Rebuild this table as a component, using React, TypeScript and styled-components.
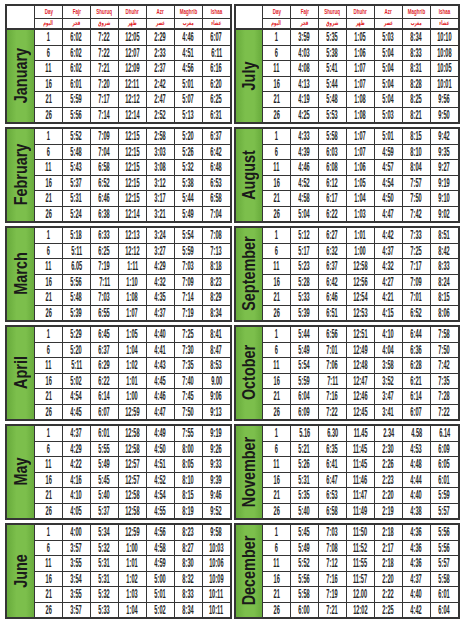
import React from 'react';
import styled, { createGlobalStyle } from 'styled-components';

const Global = createGlobalStyle`
  html, body { margin: 0; padding: 0; background: #fff; }
  body { font-family: "Liberation Sans", Arial, sans-serif; }
`;

type Row = string[];
interface Month { name: string; rows: Row[] }

const parse = (s: string): Row[] =>
  s.trim().split('\n').map((l) => l.trim().split(/\s+/));

const left: Month[] = [
  { name: 'January', rows: parse(`
1 6:02 7:22 12:05 2:29 4:46 6:07
6 6:02 7:22 12:07 2:33 4:51 6:11
11 6:02 7:21 12:09 2:37 4:56 6:16
16 6:01 7:20 12:11 2:42 5:01 6:20
21 5:59 7:17 12:12 2:47 5:07 6:25
26 5:56 7:14 12:14 2:52 5:13 6:31`) },
  { name: 'February', rows: parse(`
1 5:52 7:09 12:15 2:58 5:20 6:37
6 5:48 7:04 12:15 3:03 5:26 6:42
11 5:43 6:58 12:15 3:08 5:32 6:48
16 5:37 6:52 12:15 3:12 5:38 6:53
21 5:31 6:46 12:15 3:17 5:44 6:58
26 5:24 6:38 12:14 3:21 5:49 7:04`) },
  { name: 'March', rows: parse(`
1 5:18 6:33 12:13 3:24 5:54 7:08
6 5:11 6:25 12:12 3:27 5:59 7:13
11 6.05 7:19 1:11 4:29 7:03 8:18
16 5:56 7:11 1:10 4:32 7:09 8:23
21 5:48 7:03 1:08 4:35 7:14 8:29
26 5:39 6:55 1:07 4:37 7:19 8:34`) },
  { name: 'April', rows: parse(`
1 5:29 6:45 1:05 4:40 7:25 8:41
6 5:20 6:37 1:04 4:41 7:30 8:47
11 5:11 6:29 1:02 4:43 7:35 8:53
16 5:02 6:22 1:01 4:45 7:40 9.00
21 4:54 6:14 1:00 4:46 7:45 9:06
26 4:45 6:07 12:59 4:47 7:50 9:13`) },
  { name: 'May', rows: parse(`
1 4:37 6:01 12:58 4:49 7:55 9:19
6 4:29 5:55 12:58 4:50 8:00 9:26
11 4:22 5:49 12:57 4:51 8:05 9:33
16 4:16 5:45 12:57 4:52 8:10 9:39
21 4:10 5:40 12:58 4:54 8:15 9:46
26 4:05 5:37 12:58 4:55 8:19 9:52`) },
  { name: 'June', rows: parse(`
1 4:00 5:34 12:59 4:56 8:23 9:58
6 3:57 5:32 1:00 4:58 8:27 10:03
11 3:55 5:31 1:01 4:59 8:30 10:06
16 3:54 5:31 1:02 5:00 8:32 10:09
21 3:55 5:32 1:03 5:01 8:33 10:11
26 3:57 5:33 1:04 5:02 8:34 10:11`) },
];

const right: Month[] = [
  { name: 'July', rows: parse(`
1 3:59 5:35 1:05 5:03 8:34 10:10
6 4:03 5:38 1:06 5:04 8:33 10:08
11 4:08 5:41 1:07 5:04 8:31 10:05
16 4:13 5:44 1:07 5:04 8:28 10:01
21 4:19 5:48 1:08 5:04 8:25 9:56
26 4:25 5:53 1:08 5:03 8:21 9:50`) },
  { name: 'August', rows: parse(`
1 4:33 5:58 1:07 5:01 8:15 9:42
6 4:39 6:03 1:07 4:59 8:10 9:35
11 4:46 6:08 1:06 4:57 8:04 9:27
16 4:52 6:12 1:05 4:54 7:57 9:19
21 4:58 6:17 1:04 4:50 7:50 9:10
26 5:04 6:22 1:03 4:47 7:42 9:02`) },
  { name: 'September', rows: parse(`
1 5:12 6:27 1:01 4:42 7:33 8:51
6 5:17 6:32 1:00 4:37 7:25 8:42
11 5:23 6:37 12:58 4:32 7:17 8:33
16 5:28 6:42 12:56 4:27 7:09 8:24
21 5:33 6:46 12:54 4:21 7:01 8:15
26 5:39 6:51 12:53 4:15 6:52 8:06`) },
  { name: 'October', rows: parse(`
1 5:44 6:56 12:51 4:10 6:44 7:58
6 5:49 7:01 12:49 4:04 6:36 7:50
11 5:54 7:06 12:48 3:58 6:28 7:42
16 5:59 7:11 12:47 3:52 6:21 7:35
21 6:04 7:16 12:46 3:47 6:14 7:28
26 6:09 7:22 12:45 3:41 6:07 7:22`) },
  { name: 'November', rows: parse(`
1 5.16 6.30 11.45 2.34 4.58 6.14
6 5:21 6:35 11:45 2:30 4:53 6:09
11 5:26 6:41 11:45 2:26 4:48 6:05
16 5:31 6:47 11:46 2:23 4:44 6:01
21 5:35 6:53 11:47 2:20 4:40 5:59
26 5:40 6:58 11:49 2:19 4:38 5:57`) },
  { name: 'December', rows: parse(`
1 5:45 7:03 11:50 2:18 4:36 5:56
6 5:49 7:08 11:52 2:17 4:36 5:56
11 5:52 7:12 11:55 2:18 4:36 5:57
16 5:56 7:16 11:57 2:20 4:37 5:58
21 5:58 7:19 12.00 2:22 4:40 6:01
26 6:00 7:21 12:02 2:25 4:42 6:04`) },
];

const heads: [string, string][] = [
  ['Day', 'اليوم'],
  ['Fajr', 'فجر'],
  ['Shuruq', 'شروق'],
  ['Dhuhr', 'ظهر'],
  ['Azr', 'عصر'],
  ['Maghrib', 'مغرب'],
  ['Ishaa', 'عشاء'],
];

const LINE = '#353535';

const Page = styled.div`
  display: flex;
  align-items: flex-start;
  gap: 2px;
  padding: 4px 0 0 5px;
  width: 474px;
  height: 627px;
  box-sizing: border-box;
  overflow: hidden;
`;

const Side = styled.div`
  display: flex;
  flex-direction: column;
`;

const Header = styled.div<{ $month: number }>`
  display: grid;
  grid-template-columns: ${(p) => p.$month}px repeat(7, 27px);
  grid-template-rows: 12px 9px;
  gap: 1px;
  padding: 2px 2px 0 2px;
  background: ${LINE};
`;

const Blank = styled.div`
  grid-row: 1 / span 2;
  background: #fff;
`;

const HeadCell = styled.div<{ $ar?: boolean }>`
  background: #fff;
  display: flex;
  align-items: center;
  justify-content: center;
  overflow: hidden;
  color: #e1262c;
  font-weight: 700;
  font-size: ${(p) => (p.$ar ? '6.5px' : '7.5px')};
  font-family: ${(p) => (p.$ar ? '"DejaVu Sans", sans-serif' : '"Liberation Sans", Arial, sans-serif')};
  line-height: 1;
`;

const HeadText = styled.span`
  display: inline-block;
  transform: scaleX(0.6);
  white-space: nowrap;
`;

const Block = styled.div<{ $month: number }>`
  display: grid;
  grid-template-columns: ${(p) => p.$month}px repeat(7, 27px);
  grid-auto-rows: 14.5px;
  gap: 1px;
  padding: 2px;
  background: ${LINE};
  & + & {
    margin-top: 3px;
  }
`;

const MonthCell = styled.div`
  grid-row: 1 / span 6;
  background: linear-gradient(90deg, #68ab3c 0%, #7cbf4c 35%, #7cbf4c 70%, #68ab3c 100%);
  display: flex;
  align-items: center;
  justify-content: center;
  overflow: hidden;
`;

const MonthName = styled.span`
  writing-mode: vertical-rl;
  transform: rotate(180deg) scaleY(0.8);
  font-weight: 700;
  font-size: 18px;
  color: #1a1a1a;
  white-space: nowrap;
  line-height: 1;
`;

const Cell = styled.div`
  background: #fff;
  display: flex;
  align-items: center;
  justify-content: center;
  overflow: hidden;
`;

const Num = styled.span`
  display: inline-block;
  font-weight: 700;
  font-size: 12px;
  color: #262626;
  transform: scaleX(0.47);
  white-space: nowrap;
  line-height: 1;
`;

const Table: React.FC<{ months: Month[]; monthW: number }> = ({ months, monthW }) => (
  <Side>
    <Header $month={monthW}>
      <Blank />
      {heads.map(([en]) => (
        <HeadCell key={en}>
          <HeadText>{en}</HeadText>
        </HeadCell>
      ))}
      {heads.map(([en, ar]) => (
        <HeadCell key={en + 'ar'} $ar>
          <HeadText>{ar}</HeadText>
        </HeadCell>
      ))}
    </Header>
    {months.map((m) => (
      <Block key={m.name} $month={monthW}>
        <MonthCell>
          <MonthName>{m.name}</MonthName>
        </MonthCell>
        {m.rows.map((r, i) =>
          r.map((v, j) => (
            <Cell key={`${i}-${j}`}>
              <Num>{v}</Num>
            </Cell>
          ))
        )}
      </Block>
    ))}
  </Side>
);

export default function App() {
  return (
    <>
      <Global />
      <Page>
        <Table months={left} monthW={27} />
        <Table months={right} monthW={26} />
      </Page>
    </>
  );
}
